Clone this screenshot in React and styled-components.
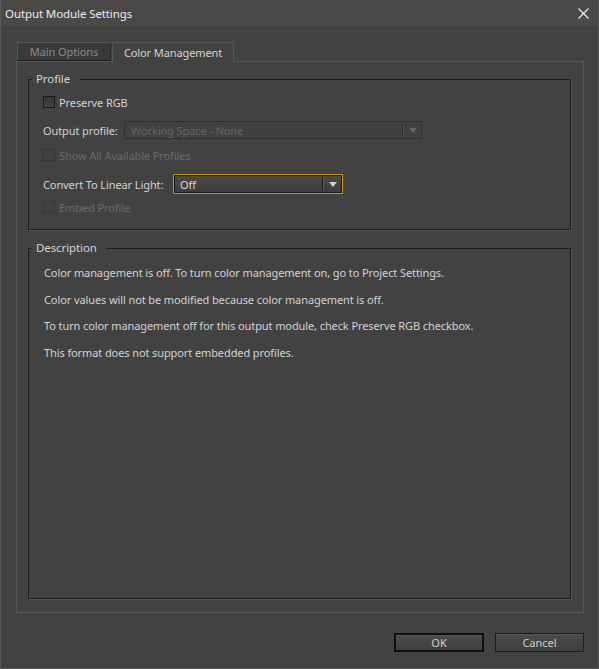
import styled, { createGlobalStyle } from "styled-components"

const Global = createGlobalStyle`
  html, body {
    margin: 0;
    padding: 0;
    background: #424242;
  }
  body {
    font-family: "Noto Sans", "Liberation Sans", sans-serif;
  }
`

const Window = styled.div`
  width: 599px;
  height: 669px;
  box-sizing: border-box;
  border: 1px solid #595959;
  border-top: none;
  background: #424242;
  display: flex;
  flex-direction: column;
  color: #d2d2d2;
  font-size: 11px;
  letter-spacing: -0.1px;
`

const TitleBar = styled.div`
  height: 26px;
  flex: none;
  background: #4a4947;
  display: flex;
  align-items: center;
  justify-content: space-between;
  padding: 0 9px 0 4px;
  font-size: 11.5px;
  color: #ececec;
`

const CloseBtn = styled.div`
  width: 12px;
  height: 12px;
  display: flex;
  align-items: center;
  justify-content: center;
`

const Body = styled.div`
  flex: 1;
  display: flex;
  flex-direction: column;
  padding: 16px 14px 0 15px;
  min-height: 0;
`

const Tabs = styled.div`
  display: flex;
  gap: 1px;
  padding-left: 1px;
  height: 19px;
  flex: none;
`

const Tab = styled.div`
  box-sizing: border-box;
  width: ${p => p.w}px;
  height: ${p => (p.active ? 20 : 19)}px;
  display: flex;
  align-items: center;
  justify-content: center;
  position: relative;
  z-index: ${p => (p.active ? 1 : 0)};
  background: ${p => (p.active ? "#424242" : "#3a3a3a")};
  border: 1px solid #575757;
  border-bottom: ${p => (p.active ? "none" : "1px solid #1c1c1c")};
  border-right-color: ${p => (p.active ? "#575757" : "#2c2c2c")};
  color: ${p => (p.active ? "#d2d2d2" : "#8a8a8a")};
`

const Panel = styled.div`
  flex: 1;
  box-sizing: border-box;
  border: 1px solid #575757;
  padding: 9px 12px 13px 11px;
  display: flex;
  flex-direction: column;
  gap: 10px;
  min-height: 0;
`

const Group = styled.fieldset`
  margin: 0;
  padding: ${p => p.pad};
  border: 1px solid #1c1c1c;
  box-shadow: 1px 1px 0 #545454;
  flex: ${p => (p.grow ? 1 : "none")};
  min-width: 0;
`

const Legend = styled.legend`
  padding: 0 10px 0 4px;
  line-height: 16px;
  font-size: 11.5px;
  color: #d2d2d2;
`

const Content = styled.div`
  padding-left: ${p => p.indent}px;
`

const Row = styled.div`
  display: flex;
  align-items: center;
  height: 20px;
  margin-top: ${p => p.mt || 0}px;
`

const Check = styled.span`
  box-sizing: border-box;
  width: 12px;
  height: 12px;
  flex: none;
  margin-right: 4px;
  border: 1px solid ${p => (p.disabled ? "#363636" : "#191919")};
  background: ${p => (p.disabled ? "#424242" : "linear-gradient(#363636, #454545)")};
`

const Label = styled.span`
  color: ${p => (p.disabled ? "#6b6b6b" : "#d2d2d2")};
  white-space: nowrap;
`

const FieldLabel = styled.span`
  width: ${p => p.w}px;
  flex: none;
  white-space: nowrap;
`

const Select = styled.div`
  box-sizing: border-box;
  width: ${p => p.w}px;
  height: ${p => (p.focus ? 20 : 18)}px;
  display: flex;
  align-items: stretch;
  border: 1px solid ${p => (p.focus ? "#c8930a" : "#2f2f2f")};
  box-shadow: ${p => (p.focus ? "inset 0 0 0 1px #1c1c1c" : "none")};
  background: ${p => (p.focus ? "linear-gradient(#4a4a4a, #3c3c3c)" : "#414141")};
  color: ${p => (p.focus ? "#d8d8d8" : "#666666")};
`

const SelectText = styled.span`
  flex: 1;
  display: flex;
  align-items: center;
  padding-left: ${p => p.pl}px;
  white-space: nowrap;
`

const Sep = styled.span`
  width: 1px;
  margin: ${p => (p.focus ? "3px 0" : "2px 0")};
  background: ${p => (p.focus ? "#1c1c1c" : "#2c2c2c")};
  border-right: 1px solid ${p => (p.focus ? "#5a5a5a" : "#505050")};
`

const ArrowBox = styled.span`
  width: ${p => p.w}px;
  display: flex;
  align-items: center;
  justify-content: center;
`

const Text = styled.p`
  margin: 0 0 10.5px;
  line-height: 16px;
  color: #d2d2d2;
  white-space: nowrap;
`

const Footer = styled.div`
  flex: none;
  display: flex;
  justify-content: flex-end;
  gap: 11px;
  padding: 20px 0 16px;
`

const Button = styled.button`
  box-sizing: border-box;
  width: ${p => p.w}px;
  height: 19px;
  padding: 0;
  font-family: inherit;
  font-size: 11px;
  color: #d0d0d0;
  border: ${p => (p.primary ? "2px solid #101010" : "1px solid #1c1c1c")};
  background: linear-gradient(#4c4c4c, #3e3e3e);
  box-shadow: inset 0 1px 0 #555;
`

function Arrow({ color }) {
  return (
    <svg width="8" height="5" viewBox="0 0 8 5">
      <polygon points="0,0 8,0 4,5" fill={color} />
    </svg>
  )
}

function Dropdown({ w, focus, value, pl, aw }) {
  return (
    <Select w={w} focus={focus}>
      <SelectText pl={pl}>{value}</SelectText>
      <Sep focus={focus} />
      <ArrowBox w={aw}>
        <Arrow color={focus ? "#cfcfcf" : "#666"} />
      </ArrowBox>
    </Select>
  )
}

function CheckRow({ label, disabled, mt }) {
  return (
    <Row mt={mt}>
      <Check disabled={disabled} />
      <Label disabled={disabled}>{label}</Label>
    </Row>
  )
}

export default function App() {
  return (
    <>
      <Global />
      <Window>
        <TitleBar>
          <span>Output Module Settings</span>
          <CloseBtn>
            <svg width="11" height="11" viewBox="0 0 11 11">
              <path d="M0.5 0.5 L10.5 10.5 M10.5 0.5 L0.5 10.5" stroke="#f0f0f0" strokeWidth="1.2" />
            </svg>
          </CloseBtn>
        </TitleBar>

        <Body>
          <Tabs>
            <Tab w={94}>Main Options</Tab>
            <Tab w={122} active>Color Management</Tab>
          </Tabs>

          <Panel>
            <Group pad="5px 0 12px 3px">
              <Legend>Profile</Legend>
              <Content indent={11}>
                <CheckRow label="Preserve RGB" />
                <Row mt={8}>
                  <FieldLabel w={81}>Output profile:</FieldLabel>
                  <Dropdown w={298} value="Working Space - None" pl={6} aw={17} />
                </Row>
                <CheckRow label="Show All Available Profiles" disabled mt={5} />
                <Row mt={9}>
                  <FieldLabel w={130}>Convert To Linear Light:</FieldLabel>
                  <Dropdown w={170} focus value="Off" pl={6} aw={18} />
                </Row>
                <CheckRow label="Embed Profile" disabled mt={3} />
              </Content>
            </Group>

            <Group grow pad="9px 0 0 3px">
              <Legend>Description</Legend>
              <Content indent={12}>
                <Text>Color management is off. To turn color management on, go to Project Settings.</Text>
                <Text>Color values will not be modified because color management is off.</Text>
                <Text>To turn color management off for this output module, check Preserve RGB checkbox.</Text>
                <Text>This format does not support embedded profiles.</Text>
              </Content>
            </Group>
          </Panel>

          <Footer>
            <Button w={90} primary>OK</Button>
            <Button w={89}>Cancel</Button>
          </Footer>
        </Body>
      </Window>
    </>
  )
}
